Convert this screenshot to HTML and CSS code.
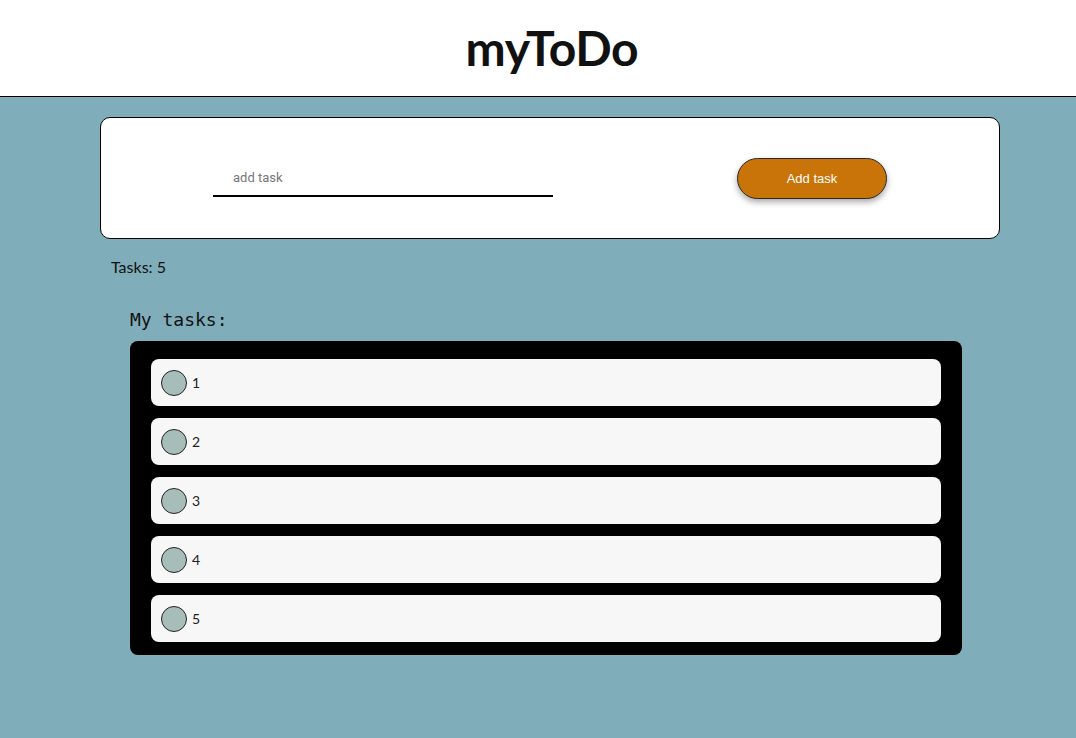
FILE: index.html
```html
<!DOCTYPE html>
<html>
<head>
<meta charset="utf-8">
<link rel="stylesheet" href="styles.css">
</head>
<body>
<header class="top">
  <h1 class="brand">myToDo</h1>
</header>
<main class="main">
  <section class="card">
    <input class="task-input" type="text" placeholder="add task">
    <button class="add-btn">Add task</button>
  </section>
  <p class="count">Tasks: 5</p>
  <section class="tasks">
    <h2 class="tasks-title">My tasks:</h2>
    <ul class="list">
      <li class="item"><span class="dot"></span><span class="label">1</span></li>
      <li class="item"><span class="dot"></span><span class="label">2</span></li>
      <li class="item"><span class="dot"></span><span class="label">3</span></li>
      <li class="item"><span class="dot"></span><span class="label">4</span></li>
      <li class="item"><span class="dot"></span><span class="label">5</span></li>
    </ul>
  </section>
</main>
</body>
</html>
```
FILE: styles.css
```css
* { box-sizing: border-box; }
html, body { margin: 0; padding: 0; }
body {
  background: #7fadba;
  height: 738px;
  font-family: "Lato", "Noto Sans", sans-serif;
}
.top {
  background: #ffffff;
  height: 97px;
  border-bottom: 1px solid #000;
  display: flex;
  align-items: center;
  justify-content: center;
  padding-left: 28px;
}
.brand {
  margin: 0 0 2px 0;
  font-family: "Lato", sans-serif;
  font-weight: 700;
  font-size: 48px;
  color: #111;
  letter-spacing: -0.3px;
}
.main {
  padding: 20px 0 0 100px;
}
.card {
  width: 900px;
  height: 122px;
  background: #fff;
  border: 1px solid #000;
  border-radius: 10px;
  display: flex;
  align-items: center;
  padding-left: 112px;
}
.task-input {
  width: 340px;
  height: 36px;
  border: none;
  border-bottom: 2px solid #000;
  outline: none;
  padding: 0 20px;
  font-family: "Roboto", "Liberation Sans", sans-serif;
  font-size: 13px;
  margin-top: 1px;
  background: transparent;
}
.task-input::placeholder { color: #777; }
.add-btn {
  margin-left: 184px;
  width: 150px;
  height: 41px;
  border-radius: 21px;
  border: 1px solid #2a2a2a;
  background: #c87408;
  color: #fff;
  font-family: "Liberation Sans", sans-serif;
  font-size: 13px;
  box-shadow: 0 3px 6px rgba(0,0,0,0.35);
}
.count {
  margin: 18px 0 0 11px;
  font-family: "Lato", sans-serif;
  font-size: 16px;
  color: #111;
}
.tasks {
  margin: 33px 0 0 30px;
  width: 832px;
}
.tasks-title {
  margin: 0 0 11px 0;
  font-family: "DejaVu Sans Mono", monospace;
  font-weight: 400;
  font-size: 18px;
  color: #111;
}
.list {
  list-style: none;
  margin: 0;
  background: #000;
  border-radius: 8px;
  padding: 18px 21px 13px 21px;
  display: flex;
  flex-direction: column;
  gap: 12px;
}
.item {
  height: 47px;
  background: #f7f7f7;
  border-radius: 8px;
  display: flex;
  align-items: center;
  padding-left: 10px;
  gap: 5px;
}
.dot {
  width: 26px;
  height: 26px;
  border-radius: 50%;
  border: 1px solid #222;
  background: #a7bdb9;
}
.label {
  font-family: "Lato", sans-serif;
  font-size: 14px;
  color: #222;
}
```
